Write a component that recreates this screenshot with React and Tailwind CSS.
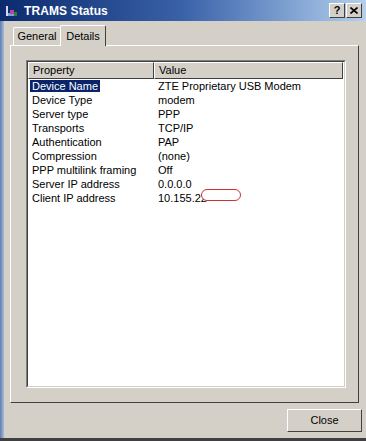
import React from "react";

const rows = [
  ["Device Name", "ZTE Proprietary USB Modem"],
  ["Device Type", "modem"],
  ["Server type", "PPP"],
  ["Transports", "TCP/IP"],
  ["Authentication", "PAP"],
  ["Compression", "(none)"],
  ["PPP multilink framing", "Off"],
  ["Server IP address", "0.0.0.0"],
  ["Client IP address", "10.155.22"],
];

function CapBtn({ children }) {
  return (
    <div className="w-[16px] h-[15px] bg-[#d4d0c8] border border-t-white border-l-white border-r-[#404040] border-b-[#404040] flex items-center justify-center text-[11px] font-bold leading-none text-black">
      {children}
    </div>
  );
}

export default function App() {
  return (
    <div className="w-[366px] h-[441px] bg-[#d4d0c8] flex flex-col font-['Liberation_Sans',Arial,sans-serif] text-[11px] text-black overflow-hidden">
      {/* title bar */}
      <div className="h-[21px] shrink-0 bg-gradient-to-r from-[#0c2a6e] via-[#3a62a8] to-[#b4d0ee] flex items-center pl-[5px] pr-[4px]">
        <svg width="14" height="14" viewBox="0 0 14 14" className="shrink-0">
          <rect x="1" y="2" width="2" height="10" fill="#d8d8f0" />
          <rect x="3" y="9" width="8" height="3" fill="#7aa0d8" />
          <rect x="5" y="6" width="4" height="4" fill="#b04aa0" />
          <rect x="9" y="8" width="3" height="4" fill="#3a7a3a" />
        </svg>
        <span className="ml-[5px] text-white font-bold text-[12px] tracking-[0.1px]">TRAMS Status</span>
        <div className="ml-auto flex gap-[1px]">
          <CapBtn>?</CapBtn>
          <CapBtn>
            <svg width="8" height="7" viewBox="0 0 8 7">
              <path d="M0.5 0.5 L7.5 6.5 M7.5 0.5 L0.5 6.5" stroke="#000" strokeWidth="1.6" />
            </svg>
          </CapBtn>
        </div>
      </div>

      <div className="flex-1 flex">
        <div className="w-[4px] shrink-0 bg-gradient-to-r from-[#5d7fb0] to-[#a9bcd8]" />
        <div className="flex-1 flex flex-col pl-[6px] pr-[3px]">
          {/* tabs */}
          <div className="h-[22px] mt-[2px] flex items-end pl-[3px]">
            <div className="h-[18px] w-[47px] border-t border-l border-white flex items-center justify-center rounded-tl-[2px]">
              General
            </div>
            <div className="h-[21px] w-[46px] border-t border-l border-white border-r border-r-[#404040] flex items-center justify-center rounded-t-[2px] relative top-[1px] bg-[#d4d0c8] z-10">
              Details
            </div>
          </div>
          {/* panel */}
          <div className="h-[358px] w-[349px] border border-t-white border-l-white border-r-[#404040] border-b-[#404040] pl-[15px] pt-[14px]">
            <div className="w-[320px] h-[328px] border border-t-[#808080] border-l-[#808080] border-r-white border-b-white">
              <div className="w-full h-full border border-t-[#404040] border-l-[#404040] border-r-[#d4d0c8] border-b-[#d4d0c8] bg-white relative">
                {/* header */}
                <div className="flex h-[17px]">
                  <div className="w-[126px] h-full bg-[#d4d0c8] border border-t-white border-l-white border-r-[#404040] border-b-[#404040] flex items-center pl-[4px]">
                    Property
                  </div>
                  <div className="w-[189px] h-full bg-[#d4d0c8] border border-t-white border-l-white border-r-[#404040] border-b-[#404040] flex items-center pl-[4px]">
                    Value
                  </div>
                </div>
                <div className="flex flex-col">
                  {rows.map(([k, v], i) => (
                    <div key={k} className="flex h-[14px] items-center">
                      <div className="w-[126px] pl-[2px]">
                        <span className={i === 0 ? "bg-[#0a246a] text-white px-[2px]" : "px-[2px]"}>{k}</span>
                      </div>
                      <div className="pl-[4px] relative">
                        {v}
                        {i === 8 && (
                          <div className="absolute left-[47px] top-[-1px] w-[40px] h-[12px] bg-white border border-[#d03030] rounded-full" />
                        )}
                      </div>
                    </div>
                  ))}
                </div>
              </div>
            </div>
          </div>
          {/* button row */}
          <div className="flex justify-end mt-[6px] pr-[1px]">
            <div className="w-[75px] h-[23px] border border-t-white border-l-white border-r-[#404040] border-b-[#404040] flex items-center justify-center">
              Close
            </div>
          </div>
        </div>
      </div>
      <div className="h-[3px] shrink-0 bg-[#404040]" />
    </div>
  );
}
